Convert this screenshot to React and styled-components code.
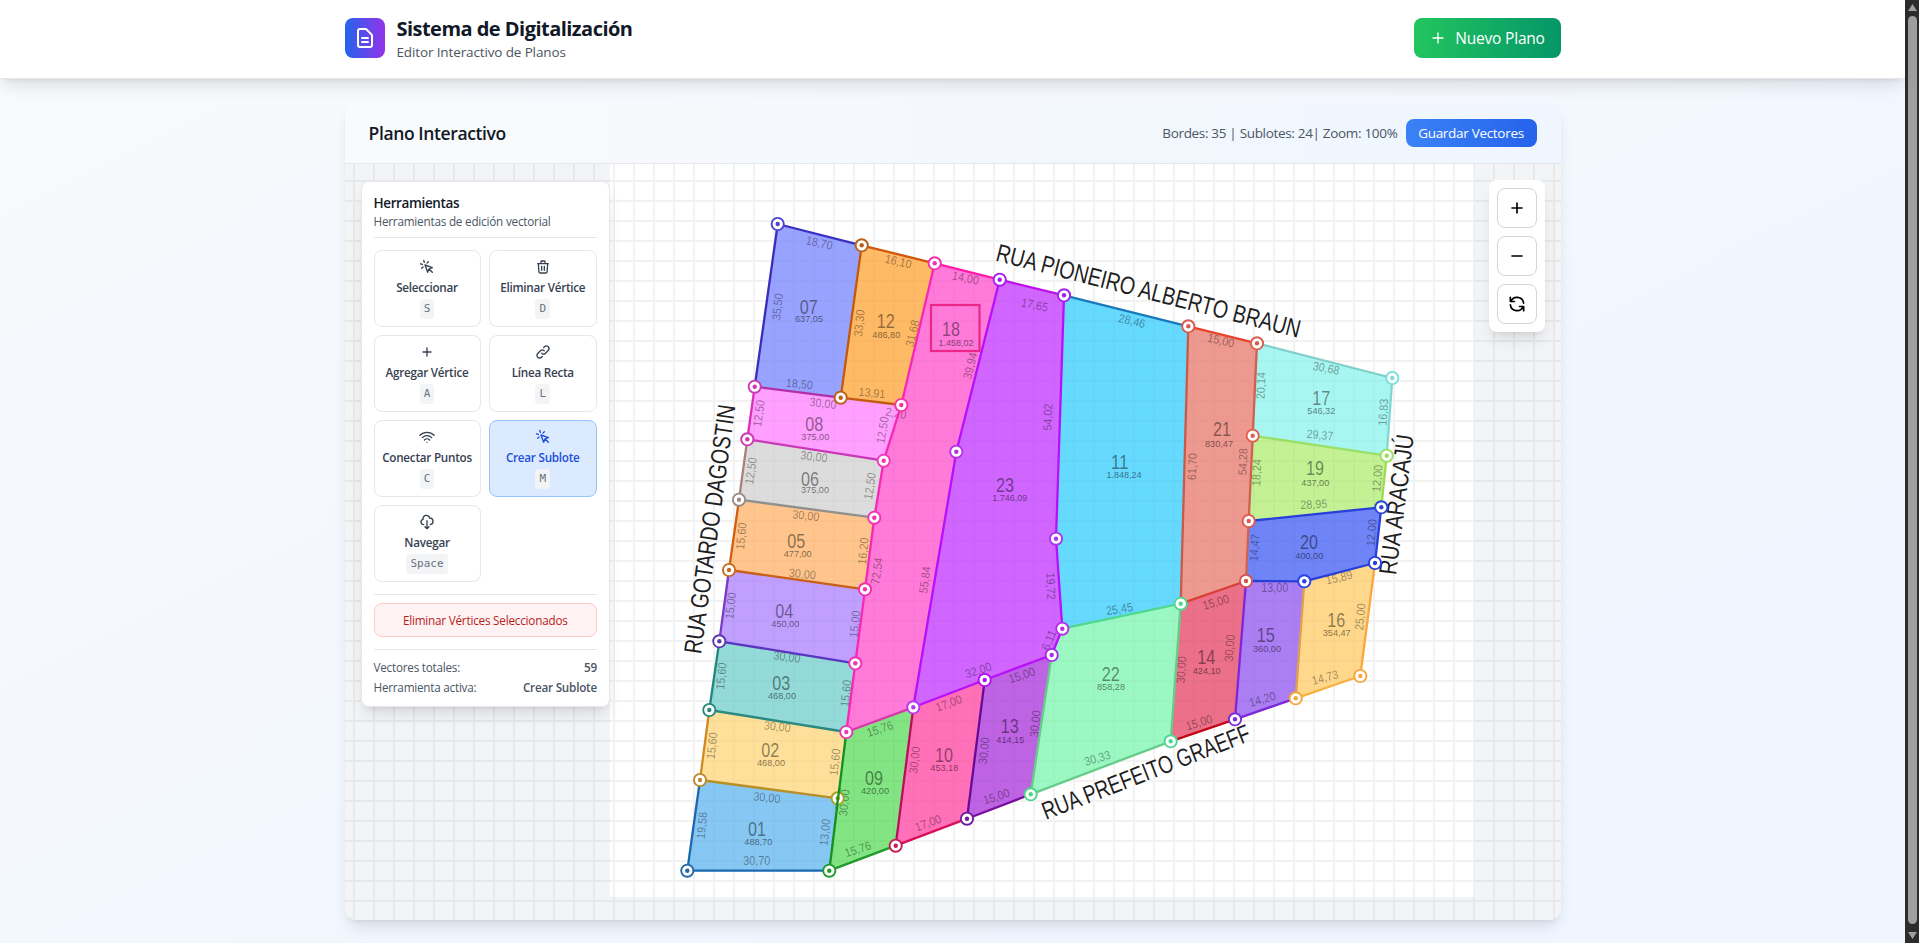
import React from "react";
import styled, { createGlobalStyle } from "styled-components";

const GlobalStyle = createGlobalStyle`
  *, *::before, *::after { box-sizing: border-box; }
  html, body { margin: 0; height: 100%; overflow: hidden; }
  body { font-family: "Open Sans", "Noto Sans", sans-serif; color: #111827; }
  #root { height: 943px; }
  button { font-family: inherit; cursor: pointer; margin: 0; }
`;

const Window = styled.div`
  display: flex;
  height: 943px;
  overflow: hidden;
`;

const Page = styled.div`
  flex: 1;
  display: flex;
  flex-direction: column;
  background: linear-gradient(to bottom right, #f8fafc 0%, #f3f7fe 50%, #eff6ff 80%);
`;

const TopBar = styled.header`
  flex: none;
  height: 79px;
  background: #fff;
  border-bottom: 1px solid #e5e7eb;
  box-shadow: 0 10px 15px -3px rgba(0, 0, 0, 0.1), 0 4px 6px -4px rgba(0, 0, 0, 0.1);
  position: relative;
`;

const TopBarInner = styled.div`
  width: 1216px;
  height: 76px;
  margin: 0 auto;
  display: flex;
  align-items: center;
  justify-content: space-between;
`;

const Brand = styled.div`
  display: flex;
  align-items: center;
  gap: 12px;
`;

const LogoBox = styled.div`
  width: 40px;
  height: 40px;
  border-radius: 8px;
  display: flex;
  align-items: center;
  justify-content: center;
  color: #fff;
  background: linear-gradient(to right, #2563eb, #9333ea);
`;

const BrandText = styled.div`
  padding-top: 2px;
`;

const BrandTitle = styled.h1`
  margin: 0;
  font-size: 20px;
  line-height: 26px;
  font-weight: 700;
  letter-spacing: -0.53px;
`;

const BrandSubtitle = styled.p`
  margin: 0;
  font-size: 13.5px;
  line-height: 20px;
  letter-spacing: -0.13px;
  color: #4b5563;
`;

const NewPlanButton = styled.button`
  width: 147px;
  height: 40px;
  padding: 0 1px 0 0;
  border: 0;
  border-radius: 8px;
  display: flex;
  align-items: center;
  justify-content: center;
  gap: 7px;
  color: #fff;
  font-size: 15.5px;
  font-weight: 500;
  letter-spacing: -0.2px;
  background: linear-gradient(to right, #22c55e, #059669);
`;

const Card = styled.main`
  width: 1216px;
  height: 817px;
  margin: 24px auto 0;
  flex: none;
  border-radius: 12px;
  overflow: hidden;
  display: flex;
  flex-direction: column;
  background: #fff;
  box-shadow: 0 10px 15px -3px rgba(0, 0, 0, 0.1), 0 4px 6px -4px rgba(0, 0, 0, 0.1);
`;

const CardHeader = styled.div`
  height: 61px;
  flex: none;
  padding: 0 24px;
  display: flex;
  align-items: center;
  justify-content: space-between;
  border-bottom: 1px solid #e5e7eb;
  background: linear-gradient(to right, #f9fafb, #eff6ff);
`;

const CardTitle = styled.h2`
  margin: 0;
  font-size: 17.5px;
  font-weight: 600;
  letter-spacing: -0.38px;
`;

const CardActions = styled.div`
  display: flex;
  align-items: center;
  gap: 8px;
`;

const Summary = styled.span`
  font-size: 13.5px;
  letter-spacing: -0.32px;
  color: #4b5563;
  white-space: nowrap;
`;

const SaveButton = styled.button`
  width: 131px;
  height: 28px;
  padding: 0;
  border: 0;
  border-radius: 8px;
  color: #fff;
  font-size: 13.5px;
  font-weight: 500;
  letter-spacing: -0.3px;
  white-space: nowrap;
  background: linear-gradient(to right, #3b82f6, #2563eb);
`;

const Canvas = styled.div`
  position: relative;
  flex: 1;
  background: #f3f4f6;
`;

const PlanSvg = styled.svg`
  display: block;
  width: 1216px;
  height: 756px;
`;

const ToolPanel = styled.aside`
  position: absolute;
  left: 16px;
  top: 16.5px;
  width: 249.5px;
  height: 526px;
  padding: 11.5px 12px 12px;
  border: 1px solid #e5e7eb;
  border-radius: 8px;
  background: rgba(255, 255, 255, 0.98);
  box-shadow: 0 10px 15px -3px rgba(0, 0, 0, 0.1), 0 4px 6px -4px rgba(0, 0, 0, 0.1);
`;

const PanelHead = styled.div`
  height: 45px;
  padding-top: 1px;
  border-bottom: 1px solid #e5e7eb;
`;

const PanelTitle = styled.h3`
  margin: 0;
  font-size: 13.5px;
  line-height: 19px;
  font-weight: 600;
  letter-spacing: -0.38px;
`;

const PanelHint = styled.p`
  margin: 0;
  font-size: 11.7px;
  line-height: 17px;
  letter-spacing: -0.2px;
  color: #4b5563;
`;

const ToolGrid = styled.div`
  margin-top: 12px;
  display: grid;
  grid-template-columns: 107px 1fr;
  gap: 8px;
`;

const ToolButton = styled.button`
  height: 77px;
  padding: 8px 0 0;
  border-radius: 8px;
  border: 1px solid ${(p) => (p.$active ? "#93c5fd" : "#e5e7eb")};
  background: ${(p) => (p.$active ? "#dbeafe" : "#fff")};
  color: ${(p) => (p.$active ? "#1d4ed8" : "#374151")};
  display: flex;
  flex-direction: column;
  align-items: center;
`;

const ToolLabel = styled.span`
  margin-top: 4px;
  font-size: 11.7px;
  line-height: 16px;
  font-weight: 600;
  letter-spacing: -0.25px;
  white-space: nowrap;
`;

const Key = styled.kbd`
  margin-top: 4px;
  padding: 2px 4px;
  border-radius: 4px;
  background: #f3f4f6;
  color: #6b7280;
  font: 11px/16px "DejaVu Sans Mono", monospace;
`;

const DangerBlock = styled.div`
  margin-top: 12px;
  padding-top: 8px;
  border-top: 1px solid #e5e7eb;
`;

const DangerButton = styled.button`
  width: 100%;
  height: 34px;
  padding: 0;
  border: 1px solid #fecaca;
  border-radius: 8px;
  background: #fef2f2;
  color: #b91c1c;
  font-size: 11.7px;
  letter-spacing: -0.2px;
`;

const Stats = styled.dl`
  margin: 12px 0 0;
  padding-top: 6.5px;
  border-top: 1px solid #e5e7eb;
  font-size: 11.7px;
  letter-spacing: -0.22px;
  color: #4b5563;
`;

const StatRow = styled.div`
  height: 20px;
  display: flex;
  align-items: center;
  justify-content: space-between;
  dd { margin: 0; font-weight: 600; color: #4b5563; }
`;

const ZoomPanel = styled.div`
  position: absolute;
  right: 16px;
  top: 16px;
  padding: 8px;
  display: flex;
  flex-direction: column;
  gap: 8px;
  border-radius: 8px;
  background: #fff;
  box-shadow: 0 10px 15px -3px rgba(0, 0, 0, 0.1), 0 4px 6px -4px rgba(0, 0, 0, 0.1);
`;

const ZoomButton = styled.button`
  width: 40px;
  height: 40px;
  padding: 0;
  display: flex;
  align-items: center;
  justify-content: center;
  border: 1px solid #d1d5db;
  border-radius: 8px;
  background: #fff;
  color: #000;
`;

const ScrollTrack = styled.div`
  width: 14px;
  flex: none;
  padding: 4px 2px 4px 3px;
  display: flex;
  flex-direction: column;
  align-items: center;
  background: #2c2c2c;
`;

const ScrollThumb = styled.div`
  width: 9px;
  flex: 1;
  margin: 5px 0 8px;
  border-radius: 5px;
  background: #9f9f9f;
`;

const Arrow = styled.svg`
  display: block;
  flex: none;
  width: 9px;
  height: 7px;
`;

const ICONS = {
  document: "M9 12h6m-6 4h6m2 5H7a2 2 0 01-2-2V5a2 2 0 012-2h5.586a1 1 0 01.707.293l5.414 5.414a1 1 0 01.293.707V19a2 2 0 01-2 2z",
  cursor: "M15 15l-2 5L9 9l11 4-5 2zm0 0l5 5M7.188 2.239l.777 2.897M5.136 7.965l-2.898-.777M13.95 4.05l-2.122 2.122m-5.657 5.656l-2.12 2.122",
  trash: "M19 7l-.867 12.142A2 2 0 0116.138 21H7.862a2 2 0 01-1.995-1.858L5 7m5 4v6m4-6v6m1-10V4a1 1 0 00-1-1h-4a1 1 0 00-1 1v3M4 7h16",
  plus: "M12 6v6m0 0v6m0-6h6m-6 0H6",
  minus: "M18 12H6",
  link: "M13.828 10.172a4 4 0 00-5.656 0l-4 4a4 4 0 105.656 5.656l1.102-1.101m-.758-4.899a4 4 0 005.656 0l4-4a4 4 0 00-5.656-5.656l-1.1 1.1",
  wifi: "M8.111 16.404a5.5 5.5 0 017.778 0M12 20h.01m-7.08-7.071c3.904-3.905 10.236-3.905 14.141 0M1.394 9.393c5.857-5.857 15.355-5.857 21.213 0",
  cloud: "M7 16a4 4 0 01-.88-7.903A5 5 0 1115.9 6L16 6a5 5 0 011 9.9M9 19l3 3m0 0l3-3m-3 3V10",
  refresh: "M4 4v5h.582m15.356 2A8.001 8.001 0 004.582 9m0 0H9m11 11v-5h-.581m0 0a8.003 8.003 0 01-15.357-2m15.357 2H15",
};

function Icon({ name, size = 16, weight = 2 }) {
  return (
    <svg width={size} height={size} viewBox="0 0 24 24" fill="none" stroke="currentColor" strokeWidth={weight} strokeLinecap="round" strokeLinejoin="round">
      <path d={ICONS[name]} />
    </svg>
  );
}

const TOOLS = [
  { icon: "cursor", label: "Seleccionar", hotkey: "S" },
  { icon: "trash", label: "Eliminar Vértice", hotkey: "D" },
  { icon: "plus", label: "Agregar Vértice", hotkey: "A" },
  { icon: "link", label: "Línea Recta", hotkey: "L" },
  { icon: "wifi", label: "Conectar Puntos", hotkey: "C" },
  { icon: "cursor", label: "Crear Sublote", hotkey: "M", active: true },
  { icon: "cloud", label: "Navegar", hotkey: "Space" },
];

// Vertices of the survey: [x, y, marker colour]
const V = {
  A: [777.7, 224, "#4a44d0"], B: [861.7, 245.3, "#b8601a"], C: [934.7, 263.3, "#f030b0"],
  D: [999.7, 279.7, "#a818f0"], E: [1064, 295.3, "#a020e8"], F: [1188.3, 326.3, "#d85a50"],
  G: [1257, 343.3, "#d8604f"], H: [1392.3, 378, "#78ded8"], I: [1386.7, 455.7, "#98e060"],
  J: [1381.3, 507.3, "#2848d8"], K: [1375, 563, "#2840e0"], L: [1304.3, 581.3, "#2840e8"],
  M: [1246, 581, "#d8504c"], N: [1252.7, 435.7, "#e0604c"], O: [1248.7, 521, "#dc5a48"],
  P: [1180.7, 603.7, "#50d890"], Q: [1360.3, 676, "#f4a83c"], R: [1295.7, 698.3, "#f0a83c"],
  S: [1235, 719.3, "#7a30d8"], T: [1170.7, 741.3, "#50d890"], U: [1030.7, 794.3, "#50d488"],
  V: [1051.7, 655, "#a828e8"], W: [1062.3, 628.7, "#b030e8"], X: [984.7, 680, "#b010f0"],
  Y: [913.3, 707.3, "#b838f0"], Z: [967, 818.7, "#6c1c9c"], a: [895.7, 845.7, "#c41c54"],
  b: [829.3, 870.7, "#1c9c28"], c: [687.3, 870.7, "#2468a8"], d: [700, 780, "#b88c2c"],
  e: [837.7, 798.3, "#a8a020"], f: [709.3, 710, "#28887c"], g: [846.3, 732, "#e838b8"],
  h: [719.3, 641.3, "#5c38b8"], i: [855.3, 663.3, "#f030b8"], j: [729, 570, "#c86c20"],
  k: [865, 589.3, "#f030b0"], l: [739, 499.7, "#988c84"], m: [874.3, 517.7, "#f030b8"],
  n: [747.3, 439.3, "#cc38b8"], o: [883.7, 460.7, "#f038b8"], p: [754.7, 386.7, "#cc38b8"],
  q: [840.7, 397.7, "#b86018"], r: [901.3, 405, "#f830a8"], s: [956.3, 451.7, "#b830e8"],
  t: [1056, 538.7, "#b030f0"],
};

// [vertices, fill, number, number position, area, area position]
const LOTS = [
  ["ABqp", "#98a3ff", "07", 808.7, 306.7, "637,05", 809, 318.7],
  ["BCrq", "#ffba66", "12", 885.7, 320.7, "486,80", 886.3, 334],
  ["CDsYgikmor", "#ff7ad9", "18", 951, 329, "1.458,02", 956, 342.7],
  ["pqron", "#ff9fff", "08", 814.3, 423.7, "375,00", 815.3, 436.3],
  ["noml", "#dcdcdc", "06", 810, 479, "375,00", 815, 489],
  ["lmkj", "#ffc58c", "05", 796.3, 540.7, "477,00", 797.7, 553.7],
  ["jkih", "#c09fff", "04", 784.3, 611, "450,00", 785.3, 623.7],
  ["higf", "#93dad8", "03", 781.3, 683, "468,00", 782, 695.3],
  ["fged", "#ffe09a", "02", 770.3, 750, "468,00", 771, 762.3],
  ["debc", "#87c7f3", "01", 757, 829, "488,70", 758.3, 841.7],
  ["gYab", "#82e482", "09", 874, 777.7, "420,00", 875, 790.3],
  ["YXZa", "#ff70b8", "10", 944, 755, "453,18", 944.3, 767],
  ["XVUZ", "#bd63e3", "13", 1009.7, 726.3, "414,15", 1010.3, 739],
  ["WPTUV", "#9bf8c2", "22", 1110.7, 673.7, "858,28", 1111, 686.3],
  ["PMST", "#ec708a", "14", 1206.3, 657.3, "424,10", 1206.7, 670.3],
  ["MLRS", "#ab7ef4", "15", 1265.7, 634.7, "360,00", 1267, 648],
  ["LKQR", "#ffd88c", "16", 1336.3, 619.7, "354,47", 1336.7, 632.3],
  ["OJKLM", "#6f84f7", "20", 1309, 541.7, "400,00", 1309.3, 555.7],
  ["NIJO", "#c3f194", "19", 1315, 468, "437,00", 1315.3, 482.3],
  ["GHIN", "#a8f6f2", "17", 1321.3, 397.7, "546,32", 1321.3, 410.3],
  ["FGNOMP", "#ee998f", "21", 1222, 429.3, "830,47", 1219, 443.3],
  ["EFPWt", "#66d9ff", "11", 1119.7, 462.3, "1.848,24", 1124, 474.7],
  ["DEtWVXYs", "#d066ff", "23", 1005, 484.7, "1.746,09", 1009.7, 497.3],
];

const EDGES = [
  ["pA", "#3a2db8"], ["AB", "#3a2fc0"], ["BC", "#d0580e"], ["CD", "#ff1ba8"], ["DE", "#bf0fe8"],
  ["EF", "#1a7ab8"], ["GH", "#80cfc8"], ["HI", "#80d8d0"], ["IJ", "#a0dc50"],
  ["KQ", "#f9a840"], ["QR", "#f8b040"], ["RS", "#7c28d8"], ["ST", "#c00818"],
  ["UZ", "#7a0ea0"], ["Za", "#d80f58"], ["bc", "#1c68b0"], ["cd", "#1c68b0"], ["df", "#d08a20"],
  ["fh", "#23877e"], ["hj", "#7a3ac8"], ["jl", "#d06010"], ["ln", "#a88080"], ["np", "#d830b8"],
  ["qp", "#b030a8"], ["no", "#c838b8"], ["lm", "#909090"], ["jk", "#c86018"], ["hi", "#5a35c0"],
  ["fg", "#2a8a80"], ["de", "#b89028"], ["Bqr", "#c05a10"], ["Cromkig", "#f828b4"],
  ["gY", "#d838a8"], ["gb", "#159020"], ["ba", "#209a28"], ["Ya", "#b81058"], ["XZ", "#6a0a98"],
  ["WP", "#50d890"], ["VUTP", "#66cc88"], ["LR", "#dca050"], ["MS", "#8424d8"],
  ["NI", "#98e068"], ["OJKLM", "#2840d8"], ["FP", "#c85a4c"], ["GNOM", "#d06050"],
  ["FG", "#e8442c"], ["PM", "#d84038"], ["DsYXVWtE", "#b810f8"],
];

// [text, x, y, rotation]
const MEASURES = [
  ["18,70", 819.3, 242.7, 13], ["16,10", 898.3, 261.3, 13], ["14,00", 965.7, 277.7, 11],
  ["35,50", 777.3, 306.7, -84], ["33,30", 859, 323, -84], ["31,68", 912.3, 333.3, -76],
  ["18,50", 799.3, 383.7, 5], ["13,91", 872, 392.7, 5], ["30,00", 823, 403, 7],
  ["12,50", 758.7, 413.3, -83], ["12,50", 882.3, 430, -80], ["2,20", 896, 413, 10],
  ["30,00", 814, 456.3, 7], ["39,94", 970, 365.7, -76], ["17,65", 1034.7, 304.7, 12],
  ["28,46", 1132, 320.7, 14], ["15,00", 1221, 340.3, 13], ["54,02", 1047.7, 417, -88],
  ["61,70", 1192, 466.7, -88], ["20,14", 1260.7, 385.7, -88], ["54,28", 1242.7, 461.7, -88],
  ["18,24", 1256.3, 472.7, -88], ["30,68", 1326.3, 368, 11], ["16,83", 1383, 412.3, -86],
  ["29,37", 1320, 434.7, 5], ["12,00", 1377, 478.3, -85], ["28,95", 1313.7, 504, -3],
  ["12,00", 1371.3, 532.7, -85], ["14,47", 1254.3, 547.7, -86], ["15,89", 1339, 577.3, -13],
  ["13,00", 1274.7, 588, 0], ["12,50", 750.7, 470.7, -82], ["12,50", 869.7, 486, -82],
  ["30,00", 806, 515.3, 6], ["15,60", 741, 536, -84], ["16,20", 863, 551, -84],
  ["30,00", 802.3, 573.7, 5], ["72,54", 876.7, 571, -82], ["55,84", 924.7, 579.7, -83],
  ["15,00", 730.3, 605.7, -84], ["15,00", 854.7, 624, -84], ["30,00", 787, 656.7, 7],
  ["15,60", 721, 676, -84], ["15,60", 845.7, 693.3, -84], ["30,00", 777.3, 726.3, 6],
  ["15,60", 711.7, 745.7, -84], ["15,60", 834.7, 762, -84], ["30,00", 767, 797.3, 6],
  ["19,58", 701.7, 825.3, -85], ["13,00", 824.7, 832.3, -84], ["30,00", 844, 802.7, -84],
  ["30,70", 756.7, 860.3, 0], ["15,76", 879.7, 728.7, -18], ["15,76", 857.7, 849, -18],
  ["17,00", 948.7, 703, -20], ["17,00", 928, 822.7, -20], ["30,00", 914.3, 760, -83],
  ["30,00", 983.7, 750.7, -84], ["32,00", 978.3, 670, -18], ["15,00", 1021.7, 675, -18],
  ["30,00", 1035, 723.7, -84], ["15,00", 996.3, 796.3, -18], ["19,72", 1051, 586, 88],
  ["6,11", 1048.7, 640, -68], ["25,45", 1119.3, 608.7, -9], ["30,33", 1097.3, 758, -17],
  ["30,00", 1181, 669.7, -86], ["30,00", 1229.3, 648, -86], ["15,00", 1215.7, 602, -17],
  ["15,00", 1199, 722.3, -17], ["14,20", 1262.3, 699, -16], ["14,73", 1325, 677.3, -15],
  ["25,00", 1360, 616.7, -84],
];

// [name, baseline start x, y, rotation, length]
const STREETS = [
  ["RUA PIONEIRO ALBERTO BRAUN", 994.8, 260.4, 14.3, 313],
  ["RUA GOTARDO DAGOSTIN", 701, 654.5, -82.1, 251],
  ["RUA ARACAJÚ", 1396, 575.5, -82.7, 141],
  ["RUA PREFEITO GRAEFF", 1046, 820, -21.2, 221],
];

const MapText = styled.text`
  font-family: "Liberation Sans", sans-serif;
  font-size: ${(p) => p.$size}px;
  fill: ${(p) => (p.$street ? "#111" : "#000")};
  fill-opacity: ${(p) => p.$alpha};
`;

const points = (keys) => keys.split("").map((k) => `${V[k][0]},${V[k][1]}`).join(" ");

function Label({ text, x, y, rotate = 0, size, length, alpha }) {
  return (
    <MapText
      $size={size}
      $alpha={alpha}
      textAnchor="middle"
      textLength={length}
      lengthAdjust="spacingAndGlyphs"
      transform={`translate(${x} ${y}) rotate(${rotate})`}
      y={size * 0.36}
    >
      {text}
    </MapText>
  );
}

function Plan() {
  return (
    <PlanSvg viewBox="345 164 1216 756">
      <defs>
        <pattern id="grid" x="353" y="180" width="20" height="20" patternUnits="userSpaceOnUse">
          <path d="M0 1H20M1 0V20" stroke="#000" strokeWidth="2" />
        </pattern>
      </defs>
      <rect x="610" y="164" width="864.5" height="733" fill="#fff" />
      <rect x="345" y="164" width="1216" height="756" fill="url(#grid)" opacity="0.03" />
      {LOTS.map(([keys, fill, number]) => (
        <polygon key={number} points={points(keys)} fill={fill} />
      ))}
      {LOTS.map(([, , number, nx, ny, area, ax, ay]) => (
        <g key={number}>
          <Label text={number} x={nx} y={ny} size={19.5} length={18} alpha={0.46} />
          <Label text={area} x={ax} y={ay} size={9.8} length={area.length > 6 ? 35 : 28} alpha={0.5} />
        </g>
      ))}
      {MEASURES.map(([text, x, y, rotate], i) => (
        <Label key={i} text={text} x={x} y={y} rotate={rotate} size={12} length={text.length > 4 ? 27 : 21} alpha={0.38} />
      ))}
      <rect x="345" y="164" width="1216" height="756" fill="url(#grid)" opacity="0.02" />
      {STREETS.map(([name, x, y, rotate, length]) => (
        <MapText key={name} $street $size={25} $alpha={0.95} textLength={length} lengthAdjust="spacingAndGlyphs" transform={`translate(${x} ${y}) rotate(${rotate})`}>
          {name}
        </MapText>
      ))}
      <rect x="931" y="305" width="48.5" height="46" fill="none" stroke="#ec2688" strokeWidth="2.2" />
      {EDGES.map(([keys, stroke]) => (
        <polyline key={keys} points={points(keys)} fill="none" stroke={stroke} strokeWidth="2.3" strokeLinejoin="round" />
      ))}
      {Object.entries(V).map(([key, [x, y, color]]) => (
        <g key={key}>
          <circle cx={x} cy={y} r="6.1" fill="#fff" stroke={color} strokeWidth="1.9" />
          <circle cx={x} cy={y} r="2.2" fill={color} />
        </g>
      ))}
      <path d="M839.5 788L836.5 809" stroke="#159020" strokeWidth="2.3" />
    </PlanSvg>
  );
}

export default function App() {
  return (
    <Window>
      <GlobalStyle />
      <Page>
        <TopBar>
          <TopBarInner>
            <Brand>
              <LogoBox><Icon name="document" size={24} /></LogoBox>
              <BrandText>
                <BrandTitle>Sistema de Digitalización</BrandTitle>
                <BrandSubtitle>Editor Interactivo de Planos</BrandSubtitle>
              </BrandText>
            </Brand>
            <NewPlanButton><Icon name="plus" size={20} weight={1.6} />Nuevo Plano</NewPlanButton>
          </TopBarInner>
        </TopBar>
        <Card>
          <CardHeader>
            <CardTitle>Plano Interactivo</CardTitle>
            <CardActions>
              <Summary>Bordes: 35 | Sublotes: 24| Zoom: 100%</Summary>
              <SaveButton>Guardar Vectores</SaveButton>
            </CardActions>
          </CardHeader>
          <Canvas>
            <Plan />
            <ToolPanel>
              <PanelHead>
                <PanelTitle>Herramientas</PanelTitle>
                <PanelHint>Herramientas de edición vectorial</PanelHint>
              </PanelHead>
              <ToolGrid>
                {TOOLS.map((tool) => (
                  <ToolButton key={tool.label} $active={tool.active}>
                    <Icon name={tool.icon} />
                    <ToolLabel>{tool.label}</ToolLabel>
                    <Key>{tool.hotkey}</Key>
                  </ToolButton>
                ))}
              </ToolGrid>
              <DangerBlock>
                <DangerButton>Eliminar Vértices Seleccionados</DangerButton>
              </DangerBlock>
              <Stats>
                <StatRow><dt>Vectores totales:</dt><dd>59</dd></StatRow>
                <StatRow><dt>Herramienta activa:</dt><dd>Crear Sublote</dd></StatRow>
              </Stats>
            </ToolPanel>
            <ZoomPanel>
              <ZoomButton><Icon name="plus" size={20} /></ZoomButton>
              <ZoomButton><Icon name="minus" size={20} /></ZoomButton>
              <ZoomButton><Icon name="refresh" size={20} /></ZoomButton>
            </ZoomPanel>
          </Canvas>
        </Card>
      </Page>
      <ScrollTrack>
        <Arrow viewBox="0 0 9 7"><path d="M4.5 0L9 7H0Z" fill="#9f9f9f" /></Arrow>
        <ScrollThumb />
        <Arrow viewBox="0 0 9 7"><path d="M0 0H9L4.5 7Z" fill="#9f9f9f" /></Arrow>
      </ScrollTrack>
    </Window>
  );
}
